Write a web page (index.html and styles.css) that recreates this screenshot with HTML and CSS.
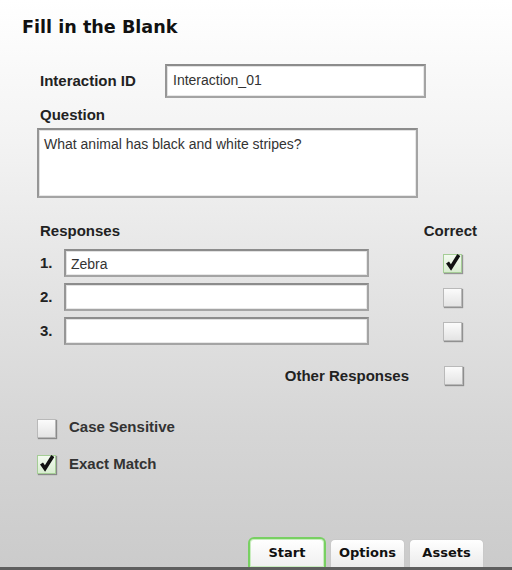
FILE: index.html
```html
<!DOCTYPE html>
<html>
<head>
<meta charset="utf-8">
<link rel="stylesheet" href="styles.css">
</head>
<body>
<div class="panel">
  <h1 class="title">Fill in the Blank</h1>

  <div class="id-row">
    <label class="label id-label">Interaction ID</label>
    <div class="field id-field">Interaction_01</div>
  </div>

  <div class="label question-label">Question</div>
  <div class="field textarea">What animal has black and white stripes?</div>

  <div class="resp-head">
    <span class="label">Responses</span>
    <span class="label">Correct</span>
  </div>

  <div class="responses">
    <div class="resp-row">
      <span class="label num">1.</span>
      <div class="field resp-field">Zebra</div>
      <span class="check checked"><svg viewBox="0 0 18 18"><path d="M3.5 9.5 L7 14.5 L14.8 2" /></svg></span>
    </div>
    <div class="resp-row">
      <span class="label num">2.</span>
      <div class="field resp-field"></div>
      <span class="check"></span>
    </div>
    <div class="resp-row">
      <span class="label num">3.</span>
      <div class="field resp-field"></div>
      <span class="check"></span>
    </div>
  </div>

  <div class="other-row">
    <span class="label">Other Responses</span>
    <span class="check"></span>
  </div>

  <div class="opt-row opt-case">
    <span class="check"></span>
    <span class="label">Case Sensitive</span>
  </div>
  <div class="opt-row opt-exact">
    <span class="check checked"><svg viewBox="0 0 18 18"><path d="M3.5 9.5 L7 14.5 L14.8 2" /></svg></span>
    <span class="label">Exact Match</span>
  </div>

  <div class="spacer"></div>

  <div class="tabs">
    <div class="tab active">Start</div>
    <div class="tab">Options</div>
    <div class="tab">Assets</div>
  </div>
</div>
</body>
</html>
```

FILE: styles.css
```css
* { box-sizing: border-box; }
html, body { margin: 0; padding: 0; }
body {
  width: 512px;
  height: 570px;
  overflow: hidden;
  font-family: "Liberation Sans", Arial, sans-serif;
  color: #222;
}
.panel {
  height: 570px;
  display: flex;
  flex-direction: column;
  background: linear-gradient(to bottom, #ffffff 0%, #f3f3f3 25%, #e4e4e4 50%, #d6d6d6 75%, #cbcbcb 100%);
  border-bottom: 3px solid #5e5e5e;
}
.title {
  margin: 17px 0 0 22px;
  font-family: "DejaVu Sans", Verdana, sans-serif;
  font-weight: bold;
  font-size: 17.6px;
  line-height: 20px;
  color: #111;
}
.label {
  font-weight: bold;
  font-size: 15px;
  line-height: 18px;
  color: #222;
}
.field {
  background: #fff;
  border: 2px solid #a4a4a4;
  border-top-color: #8c8c8c;
  border-left-color: #969696;
  box-shadow: inset 1px 1px 0 #e2e2e2, inset -1px -1px 0 #e8e8e8;
  font-size: 14px;
  color: #333;
}
.id-row {
  margin-top: 27px;
  display: flex;
  align-items: center;
  padding-left: 40px;
}
.id-label { width: 125px; }
.id-field {
  width: 261px;
  height: 34px;
  padding: 5px 0 0 6px;
  line-height: 18px;
}
.question-label {
  margin: 8px 0 0 40px;
}
.textarea {
  margin: 4px 0 0 37px;
  width: 381px;
  height: 70px;
  padding: 5px 5px 0 5px;
  line-height: 18px;
}
.resp-head {
  margin-top: 24px;
  display: flex;
  justify-content: space-between;
  padding: 0 35px 0 40px;
}
.responses {
  margin-top: 9px;
  display: flex;
  flex-direction: column;
  gap: 6px;
}
.resp-row {
  display: flex;
  align-items: center;
  padding-left: 40px;
  height: 28px;
}
.num { width: 24px; }
.resp-field {
  width: 305px;
  height: 28px;
  padding: 4px 0 0 5px;
  line-height: 18px;
}
.resp-row .check { margin-left: 74px; }
.check {
  flex: none;
  width: 19px;
  height: 19px;
  border: 1px solid #b9b9b9;
  background: linear-gradient(to bottom, #fbfbfb, #e4e4e4);
  box-shadow: 1px 1px 1px rgba(0, 0, 0, 0.35);
  display: flex;
  align-items: center;
  justify-content: center;
}
.check.checked {
  border-color: #a5cd96;
  background: linear-gradient(to bottom, #f3faf0, #d8ecd0);
}
.check svg {
  width: 18px;
  height: 18px;
  margin-top: -3px;
  overflow: visible;
}
.check svg path {
  fill: none;
  stroke: #111;
  stroke-width: 3.6;
  stroke-linecap: butt;
  stroke-linejoin: miter;
}
.other-row {
  margin-top: 21px;
  display: flex;
  align-items: center;
  justify-content: flex-end;
  padding-right: 49px;
  gap: 35px;
}
.opt-row {
  display: flex;
  align-items: flex-start;
  padding-left: 37px;
  gap: 13px;
}
.opt-row .label { color: #333; }
.opt-case { margin-top: 34px; }
.opt-case .label { margin-top: -1px; }
.opt-exact { margin-top: 16px; }
.opt-exact .label { margin-top: 1px; }
.opt-exact .check { margin-top: 1px; }
.spacer { flex: 1; }
.tabs {
  display: flex;
  align-items: flex-end;
  gap: 4px;
  padding-left: 248px;
}
.tab {
  height: 28px;
  width: 75px;
  border: 1px solid #c9c9c9;
  border-bottom: none;
  border-radius: 5px 5px 0 0;
  background: linear-gradient(to bottom, #ffffff, #ebebeb);
  font-family: "DejaVu Sans", Verdana, sans-serif;
  font-weight: bold;
  font-size: 13px;
  line-height: 26px;
  text-align: center;
  color: #111;
}
.tab.active {
  width: 78px;
  height: 30px;
  border: 2px solid #78d062;
  border-bottom: none;
  border-radius: 6px 6px 0 0;
  box-shadow: inset 0 0 0 1px #c9ecbf;
  background: linear-gradient(to bottom, #ffffff, #f0f0f0);
  line-height: 28px;
}
```
